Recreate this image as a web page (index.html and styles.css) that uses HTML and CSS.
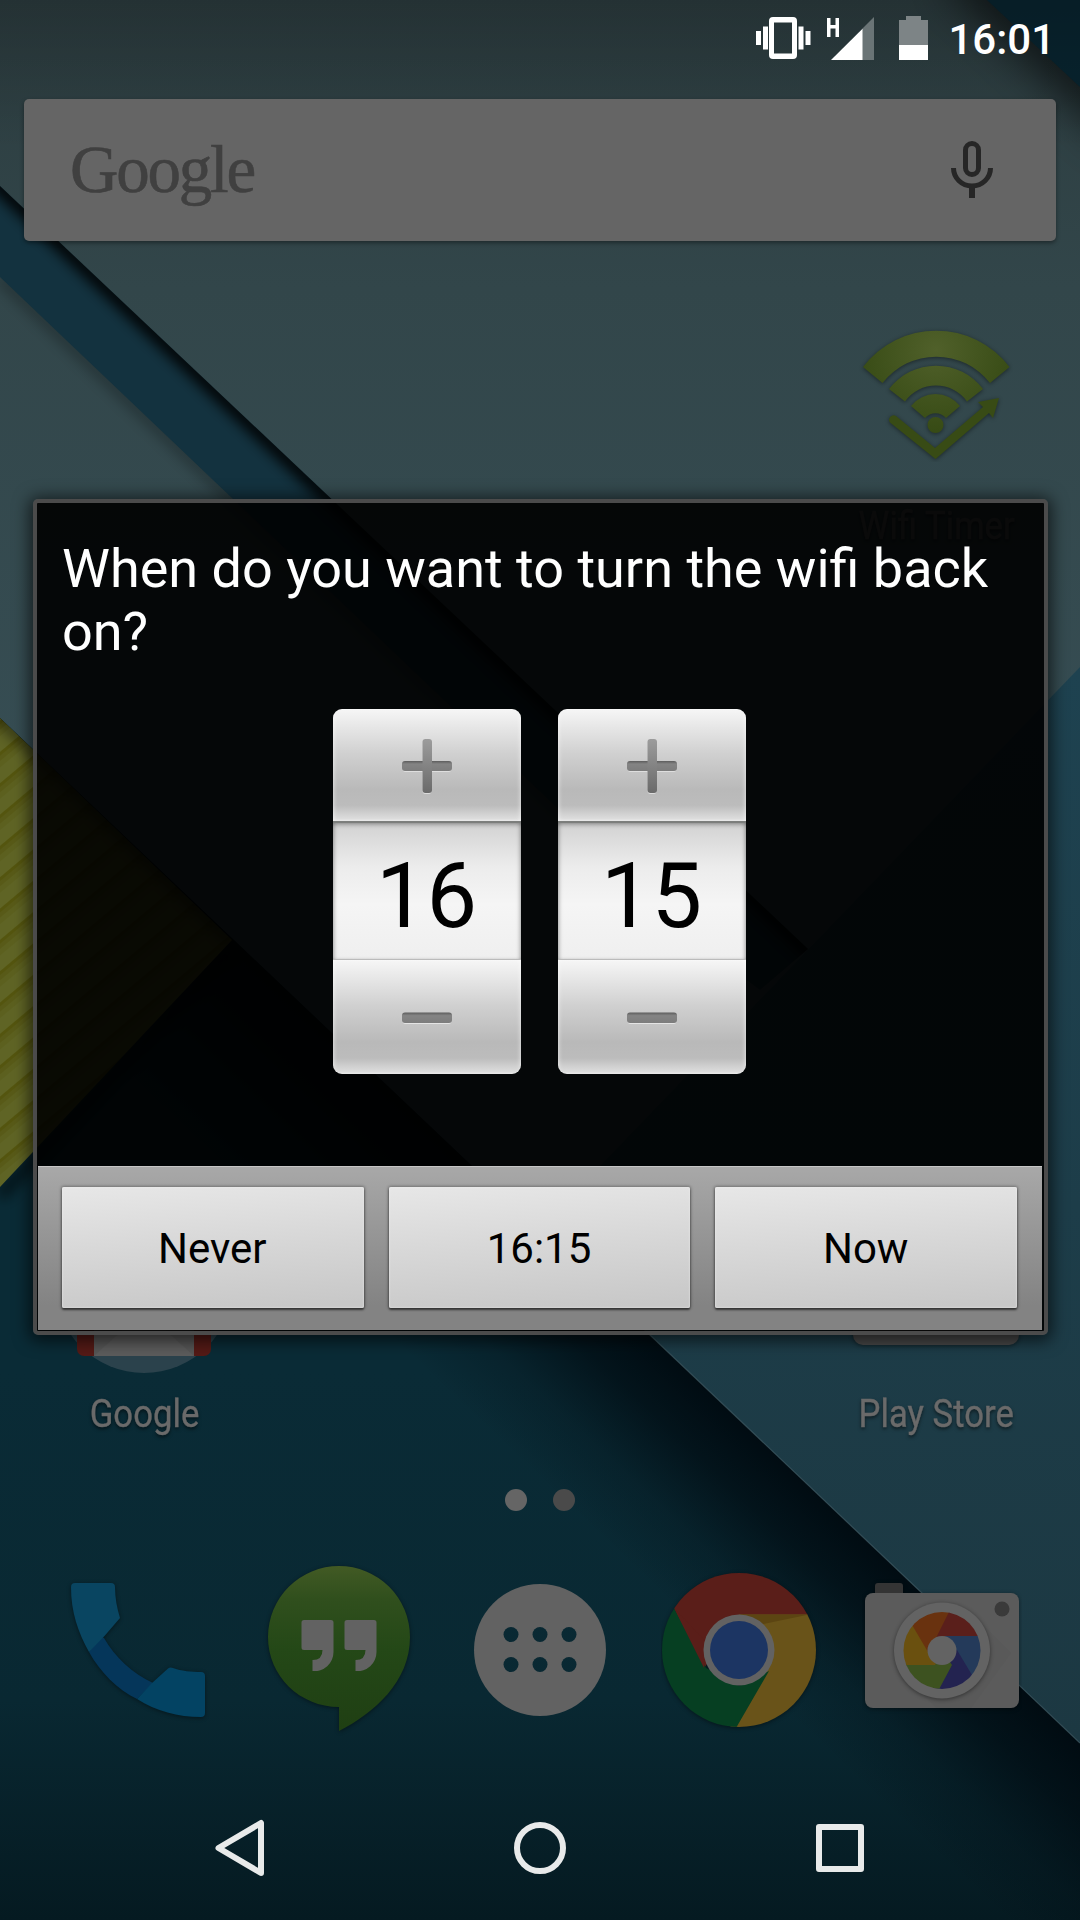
FILE: index.html
```html
<!DOCTYPE html>
<html lang="en">
<head>
<meta charset="utf-8">
<title>Wifi Timer</title>
<link rel="stylesheet" href="styles.css">
</head>
<body>
<div class="screen">
  <svg class="wallpaper" viewBox="0 0 1080 1920" aria-hidden="true">
    <defs>
      <linearGradient id="base" x1="0" y1="0" x2="0" y2="1"><stop offset="0.55" stop-color="#0a2b36"/><stop offset="0.82" stop-color="#092832"/><stop offset="1" stop-color="#051a21"/></linearGradient>
      <linearGradient id="paper" x1="0" y1="0" x2="0" y2="1"><stop offset="0" stop-color="#2c3c3f"/><stop offset="0.15" stop-color="#32464a"/><stop offset="0.4" stop-color="#364d53"/></linearGradient>
      <linearGradient id="blue" x1="0" y1="0" x2="0" y2="1"><stop offset="0" stop-color="#1e4250"/><stop offset="1" stop-color="#1c3842"/></linearGradient>
      <linearGradient id="topfade" x1="0" y1="0" x2="0" y2="1"><stop offset="0" stop-color="#000" stop-opacity=".18"/><stop offset="1" stop-color="#000" stop-opacity="0"/></linearGradient>
      <linearGradient id="fold" gradientUnits="userSpaceOnUse" x1="800" y1="1477" x2="676" y2="1608"><stop offset="0" stop-color="#000a10" stop-opacity=".95"/><stop offset=".3" stop-color="#000a10" stop-opacity=".7"/><stop offset=".65" stop-color="#000a10" stop-opacity=".25"/><stop offset="1" stop-color="#000a10" stop-opacity="0"/></linearGradient>
      <pattern id="ridges" width="27" height="24" patternUnits="userSpaceOnUse" patternTransform="rotate(-40)"><rect width="27" height="24" fill="#5f6425"/><rect width="27" height="3" fill="#54550f"/><rect y="3" width="27" height="4" fill="#585a18"/><rect y="7" width="27" height="5" fill="#5c601f"/></pattern>
      <filter id="soft" x="-30%" y="-30%" width="160%" height="160%"><feGaussianBlur stdDeviation="24"/></filter>
      <filter id="tight" x="-30%" y="-30%" width="160%" height="160%"><feGaussianBlur stdDeviation="7"/></filter>
      <clipPath id="clipLow"><path d="M0 718L1080 1743V1920H0z"/></clipPath>
      <clipPath id="clipBand"><path d="M0 186L808 949 L760 990 L700 944 L0 277z"/></clipPath>
      <clipPath id="clipYellow"><path d="M0 718L232 940L0 1187z"/></clipPath>
    </defs>
    <rect width="1080" height="1920" fill="url(#paper)"/>
    <path d="M0 277L700 944" stroke="#000" stroke-opacity=".3" stroke-width="12" filter="url(#tight)"/>
    <path d="M0 186L808 949L760 990L700 944L0 277z" fill="#13323f"/>
    <g clip-path="url(#clipBand)"><path d="M-30 158L820 961" stroke="#000" stroke-width="15" filter="url(#tight)"/></g>
    <path d="M1080 667L600 1166V1300L1080 1743z" fill="url(#blue)"/>
    <path d="M960 -40L1140 130" stroke="#000" stroke-opacity=".75" stroke-width="44" filter="url(#soft)"/>
    <path d="M987 0H1080V87z" fill="#08242f"/>
    <g clip-path="url(#clipLow)">
      <rect y="700" width="1080" height="1220" fill="url(#base)"/>
      <rect y="700" width="1080" height="1220" fill="url(#fold)"/>
    </g>
    <path d="M475 1169L1080 1743" stroke="#45606a" stroke-opacity=".7" stroke-width="1.2"/>
    <path d="M0 1196L232 950" stroke="#000" stroke-opacity=".6" stroke-width="12" filter="url(#tight)"/>
    <path d="M0 718L232 940L0 1187z" fill="url(#ridges)"/>
    <g clip-path="url(#clipYellow)"><path d="M-10 708L232 940" stroke="#000" stroke-opacity=".5" stroke-width="12" filter="url(#tight)"/></g>
    <rect width="1080" height="150" fill="url(#topfade)"/>
  </svg>

  <header class="status">
    <svg width="56" height="44" viewBox="755 15 56 44"><g fill="#fff"><path d="M756 30h5v14h-5zM763 25.500h5v23h-5zM798.500 25.500h5v23h-5zM805.500 30h5v14h-5z"/><path fill-rule="evenodd" d="M773 16h20a4 4 0 0 1 4 4v34a4 4 0 0 1-4 4h-20a4 4 0 0 1-4-4V20a4 4 0 0 1 4-4zm1 5.500v31h18v-31z"/></g></svg>
    <svg class="signal" width="50" height="44" viewBox="826 15 50 44"><path fill="#fff" d="M827 17h3.500v7h5v-7h3.500v19h-3.500v-8.500h-5V36H827z"/><path fill="#6a7476" d="M874 16v43h-12V28z"/><path fill="#fff" d="M831 59h31.500V27.700z"/></svg>
    <svg class="battery" width="29" height="44" viewBox="899 15 29 44"><path fill="#7d8486" d="M906 15h15v4h7v26h-29V19h7z"/><path fill="#fff" d="M899 44h29v15h-29z"/></svg>
    <span class="clock">16:01</span>
  </header>

  <main class="home">
    <div class="search">
      <span class="wordmark">Google</span>
      <svg class="mic" width="44" height="60" viewBox="950 140 44 60" fill="none" stroke="#262626"><rect x="965.500" y="143.500" width="13" height="31" rx="6.500" stroke-width="5"/><path stroke-width="5" d="M953.500 168a18.500 18 0 0 0 37 0"/><path stroke-width="6" d="M972 186v12"/></svg>
    </div>

    <div class="row row-top">
      <div class="app">
        <svg width="160" height="136" viewBox="856 326 160 136">
          <defs><radialGradient id="olive" gradientUnits="userSpaceOnUse" cx="936" cy="350" r="85"><stop offset="0" stop-color="#50602a"/><stop offset="1" stop-color="#364a14"/></radialGradient></defs>
          <g class="shadow" fill="url(#olive)">
            <path d="M863 367A92 92 0 0 1 1009.500 367L990 383A68 68 0 0 0 882.500 383z"/>
            <path d="M889 389A59 59 0 0 1 983 389L967 401.500A38 38 0 0 0 905 401.500z"/>
            <path d="M911 406A31 31 0 0 1 960 406L946 418A14 14 0 0 0 925 418z"/>
            <circle cx="935.500" cy="425" r="8"/>
            <path d="M896 416L935 448L983 407L978 402L999 398L993 418L989 413L935.500 459L890 422.500A4.500 4.500 0 0 1 896 416z" fill="#384b15"/>
          </g>
        </svg>
        <span class="label">Wifi Timer</span>
      </div>
    </div>

    <div class="row row-bottom">
      <div class="app">
        <svg width="180" height="180" viewBox="54 1195 180 180"><circle cx="144" cy="1285" r="89" fill="#2b424c"/><rect x="77" y="1260" width="134" height="97" rx="7" fill="#541a16"/><path d="M94 1260h100v97H94z" fill="#565656"/><path d="M94 1357l42-38 16 0 42 38z" fill="#5c5c5c"/></svg>
        <span class="label">Google</span>
      </div>
      <div class="app">
        <svg width="180" height="180" viewBox="846 1195 180 180"><path class="shadow" d="M853 1220h166v116a10 10 0 0 1-10 10H863a10 10 0 0 1-10-10z" fill="#484848"/></svg>
        <span class="label">Play Store</span>
      </div>
    </div>

    <div class="pages"><i class="dot dot-on"></i><i class="dot"></i></div>

    <nav class="dock">
      <svg width="160" height="180" viewBox="58 1560 160 180"><g class="shadow">
        <path d="M100 1636L89 1652C100 1672 118 1690 137 1699L153 1683C132 1673 115 1657 104 1638z" fill="#05365a"/>
        <path d="M75 1583H111Q115 1583 115 1587C115 1598 117 1608 120 1618L104.500 1636L89 1652C78 1632 71 1612 71 1587Q71 1583 75 1583z" fill="#094561"/>
        <path d="M137 1699L152 1683L168 1668.500Q170 1667 173 1668C181 1671 192 1672 201 1672Q205 1672 205 1676V1713Q205 1717 201 1717C178 1717 156 1711 137 1699z" fill="#034363"/></g></svg>
      <svg width="160" height="180" viewBox="259 1560 160 180"><defs><linearGradient id="hang" x1="0" y1="0" x2="0" y2="1"><stop offset="0" stop-color="#425a24"/><stop offset=".2" stop-color="#304f1d"/><stop offset=".5" stop-color="#244817"/><stop offset="1" stop-color="#1f3f13"/></linearGradient></defs><g class="shadow"><path d="M339 1566A71 71 0 0 0 268 1637C268 1676 300 1707 339 1707V1731C374 1713 410 1682 410 1637A71 71 0 0 0 339 1566z" fill="url(#hang)"/><path id="q" d="M304 1620h27a2.500 2.500 0 0 1 2.500 2.500V1652a19 19 0 0 1-21 19V1660q10 0 10-10h-18.500a2.500 2.500 0 0 1-2.500-2.500v-25a2.500 2.500 0 0 1 2.500-2.500z" fill="#626262"/><use href="#q" x="43"/></g></svg>
      <svg width="160" height="180" viewBox="460 1560 160 180"><defs><mask id="holes"><rect x="460" y="1560" width="160" height="180" fill="#fff"/><g fill="#000"><circle cx="511" cy="1634.500" r="7.500"/><circle cx="540" cy="1634.500" r="7.500"/><circle cx="569" cy="1634.500" r="7.500"/><circle cx="511" cy="1664.500" r="7.500"/><circle cx="540" cy="1664.500" r="7.500"/><circle cx="569" cy="1664.500" r="7.500"/></g></mask></defs><circle cx="540" cy="1650" r="66" fill="#626262" mask="url(#holes)"/></svg>
      <svg width="160" height="180" viewBox="661 1560 160 180"><defs><clipPath id="disc"><circle cx="739" cy="1650" r="77"/></clipPath></defs><g class="shadow"><g clip-path="url(#disc)"><path d="M660 1570h160v45h-81l-36 55-30-64z" fill="#5a1e19"/><path d="M739 1614.500h85V1740h-100l28-60z" fill="#695319"/><path d="M739 1614.500h70l-48 10z" fill="#5c4512"/><path d="M674 1608L706 1668L739 1686L769 1671L736 1728L730 1740H650V1600z" fill="#063f22"/><path d="M674 1608l30 60 3-25z" fill="#5a1e19"/></g><circle cx="739" cy="1650" r="35.500" fill="#626262"/><circle cx="739" cy="1650" r="29" fill="#1c3563"/></g></svg>
      <svg width="160" height="180" viewBox="862 1560 160 180"><defs><clipPath id="lens"><circle cx="942" cy="1650.500" r="38.500"/></clipPath></defs><g class="shadow"><path d="M875 1595v-9q0-3 3-3h22q3 0 3 3v9z" fill="#343434"/><rect x="865" y="1593" width="154" height="115" rx="8" fill="#5b5b5b"/></g><path d="M975 1617l36 36-40 55h-35l-25-27z" fill="#595959"/><circle class="shadow" cx="942" cy="1650.500" r="48" fill="#636363"/><g clip-path="url(#lens)"><path d="M942 1650V1636H990V1690H975z" fill="#243a5a"/><path d="M942 1650L957 1650L975 1680L960 1700H930z" fill="#232350"/><path d="M942 1650L952 1665L936 1695H900V1665z" fill="#3d5220"/><path d="M942 1650L935 1665H890V1610L912 1625z" fill="#6a500f"/><path d="M942 1650L928 1652L908 1618L915 1600H952z" fill="#69320f"/><path d="M930 1650L955 1600H990V1636H942z" fill="#5a1f1b"/></g><circle cx="942" cy="1650.500" r="14.500" fill="#636363"/><circle cx="1002" cy="1609" r="7.500" fill="#3a3a3a"/></svg>
    </nav>
  </main>

  <footer class="navbar">
    <svg width="60" height="60" viewBox="210 1818 60 60" fill="none" stroke="#e8eaea" stroke-width="6" stroke-linejoin="round"><path d="M218.500 1848L261 1823V1873z"/></svg>
    <svg width="60" height="60" viewBox="510 1818 60 60" fill="none" stroke="#e8eaea" stroke-width="6"><circle cx="540" cy="1848" r="23"/></svg>
    <svg width="60" height="60" viewBox="810 1818 60 60" fill="none" stroke="#e8eaea" stroke-width="6" stroke-linejoin="round"><rect x="819" y="1827" width="42" height="42"/></svg>
  </footer>

  <section class="dialog" role="dialog">
    <h1 class="title">When do you want to turn the wifi back on?</h1>
    <div class="pickers">
      <div class="picker">
        <button class="step step-up" aria-label="Increase hour"><svg width="52" height="58" viewBox="0 0 52 58"><use href="#plus"/></svg></button>
        <div class="value">16</div>
        <button class="step step-down" aria-label="Decrease hour"><svg width="52" height="14" viewBox="0 0 52 14"><use href="#minus"/></svg></button>
      </div>
      <div class="picker">
        <button class="step step-up" aria-label="Increase minute"><svg width="52" height="58" viewBox="0 0 52 58"><defs>
          <linearGradient id="ink" x1="0" y1="0" x2="0" y2="1"><stop offset="0" stop-color="#9c9c9c"/><stop offset="1" stop-color="#6a6a6a"/></linearGradient>
          <linearGradient id="inkbar" x1="0" y1="0" x2="0" y2="1"><stop offset="0" stop-color="#5c5c5c"/><stop offset=".3" stop-color="#848484"/><stop offset="1" stop-color="#7c7c7c"/></linearGradient>
          <g id="plus"><rect x="1.500" y="25" width="49" height="10" rx="3" fill="#dedede"/><rect x="21.500" y="3" width="9" height="54" rx="3" fill="#dcdcdc"/><rect x="1" y="24" width="50" height="10" rx="3" fill="url(#inkbar)"/><rect x="21.500" y="2" width="9.500" height="54" rx="3" fill="url(#ink)"/></g>
          <g id="minus"><rect x="1.500" y="3" width="49" height="10" rx="3" fill="#e4e4e4"/><rect x="1" y="1.500" width="50" height="10.500" rx="3" fill="url(#inkbar)"/></g>
        </defs><use href="#plus"/></svg></button>
        <div class="value">15</div>
        <button class="step step-down" aria-label="Decrease minute"><svg width="52" height="14" viewBox="0 0 52 14"><use href="#minus"/></svg></button>
      </div>
    </div>
    <div class="actions">
      <button class="action">Never</button>
      <button class="action">16:15</button>
      <button class="action">Now</button>
    </div>
  </section>
</div>
</body>
</html>
```
FILE: styles.css
```css
* { box-sizing: border-box; }
body { margin: 0; font-family: Roboto, sans-serif; background: #092933; }
button { font: inherit; border: 0; margin: 0; padding: 0; }
svg { display: block; flex: none; }
.shadow { filter: drop-shadow(0 1px 2px rgba(0, 0, 0, .45)); }

.screen { position: relative; width: 1080px; height: 1920px; overflow: hidden; display: flex; flex-direction: column; }
.wallpaper { position: absolute; inset: 0; width: 1080px; height: 1920px; }

.status { position: relative; height: 75px; padding: 0 25px 0 0; display: flex; align-items: center; justify-content: flex-end; color: #fff; }
.signal { margin-left: 15px; }
.battery { margin-left: 23px; }
.clock { margin-left: 20px; padding-top: 4px; font-size: 42px; font-weight: 500; line-height: 48px; }

.home { position: relative; height: 1701px; display: flex; flex-direction: column; }
.search { height: 142px; margin: 24px 24px 0; padding: 0 62px 0 46px; display: flex; align-items: center; justify-content: space-between; background: #656565; border-radius: 5px; box-shadow: 0 2px 4px rgba(0, 0, 0, .4); }
.wordmark { font-family: "Liberation Serif", serif; font-size: 67px; line-height: 76px; padding-bottom: 2px; letter-spacing: -2.2px; color: #404040; -webkit-text-stroke: .6px #404040; }

.row { display: flex; padding: 0 36px; }
.row-top { justify-content: flex-end; padding-top: 85px; }
.row-bottom { justify-content: space-between; margin-top: 645px; }
.app { width: 216px; display: flex; flex-direction: column; align-items: center; }
.label { font-size: 39px; line-height: 46px; margin-top: 17px; padding-left: 1px; color: #6a6a6a; white-space: nowrap; transform: scaleX(.89); text-shadow: 0 2px 4px rgba(0, 0, 0, .6); -webkit-text-stroke: .4px #6a6a6a; }
.row-top .label { margin-top: 41px; }

.pages { display: flex; justify-content: center; gap: 26px; margin-top: 52px; }
.dot { width: 22px; height: 22px; border-radius: 50%; background: #4a4a4a; }
.dot-on { background: #656565; }
.dock { display: flex; justify-content: space-between; padding: 0 58px; margin-top: 49px; }

.navbar { position: relative; height: 144px; display: flex; align-items: center; justify-content: center; gap: 240px; }

.dialog { position: absolute; left: 33px; top: 499px; width: 1015px; height: 836px; display: flex; flex-direction: column; border: 4px solid #4b4b4b; border-radius: 5px; background: rgba(0, 0, 0, .9); box-shadow: 0 2px 16px 4px rgba(0, 0, 0, .6); }
.title { margin: 0; padding: 34px 24px 0 25px; font-size: 54px; font-weight: 400; line-height: 63px; color: #fff; }
.pickers { display: flex; justify-content: center; gap: 37px; margin-top: 46px; padding-right: 3px; }
.picker { width: 188px; height: 365px; border-radius: 9px; overflow: hidden; display: flex; flex-direction: column; }
.step { display: flex; justify-content: center; align-items: center; width: 100%; padding-top: 2px; background: linear-gradient(#f6f6f6, #d0d0d0 40%, #b9b9b9 72%, #bcbcbc 86%, #e2e2e2); box-shadow: inset 2px 0 4px -1px rgba(255, 255, 255, .5), inset -2px 0 4px -1px rgba(255, 255, 255, .5); }
.step-up { height: 112px; }
.step-down { height: 114px; }
.value { height: 139px; padding: 11px 0 0; text-align: center; font-size: 90px; line-height: 126px; color: #000; border-top: 2px solid #7c7e7c; border-bottom: 1px solid #bbb; background: linear-gradient(#d2d2d2, #ececec 32%, #f5f5f5 60%, #efefef); box-shadow: inset 0 3px 4px -1px rgba(0, 0, 0, .25), inset 3px 0 4px -2px rgba(0, 0, 0, .25), inset -3px 0 4px -2px rgba(0, 0, 0, .25); }
.actions { margin: auto 2px 1px 1px; height: 164px; padding: 20px 25px 22px 24px; display: flex; gap: 25px; background: linear-gradient(#a8a8a8, #9f9f9f 20%, #838383 85%); border-top: 1px solid #c6c6c6; }
.action { flex: 1; padding: 1px 1px 0 0; font-size: 42px; color: #000; border-radius: 2px; background: linear-gradient(176deg, #e7e7e7, #d8d8d8 45%, #c8c8c8 95%); box-shadow: 0 2px 2px rgba(0, 0, 0, .5), 0 0 3px 1px rgba(0, 0, 0, .3), inset 0 0 2px #eee; }
```
